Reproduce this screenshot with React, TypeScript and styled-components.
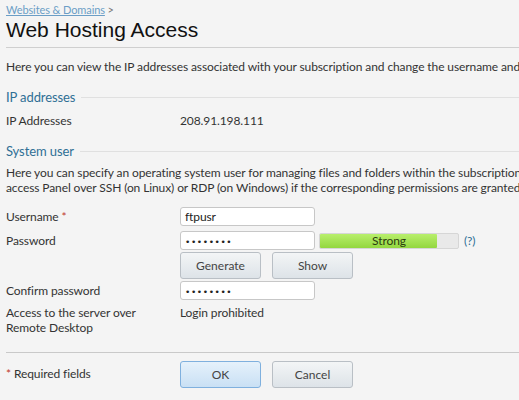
import React from "react";
import styled, { createGlobalStyle } from "styled-components";

const GlobalStyle = createGlobalStyle`
  html, body {
    margin: 0;
    padding: 0;
    background: #f4f4f4;
    overflow: hidden;
  }
  body {
    font-family: Lato, "Liberation Sans", Arial, sans-serif;
    font-size: 12px;
    letter-spacing: -0.1px;
    color: #333;
  }
`;

const Page = styled.div`
  padding: 3px 0 0 6px;
  width: 640px;
`;

const Breadcrumb = styled.div`
  font-size: 11px;
  color: #777;
  line-height: 14px;

  a {
    color: #6b9ec6;
    text-decoration: underline;
  }
`;

const Title = styled.h1`
  margin: 0;
  font-family: "Liberation Sans", Arial, sans-serif;
  font-weight: normal;
  font-size: 21px;
  letter-spacing: 0;
  line-height: 26px;
  color: #111;
  padding-bottom: 4px;
  border-bottom: 1px solid #cfcfcf;
`;

const Intro = styled.p`
  margin: 12px 0 0;
  line-height: 14px;
  white-space: nowrap;
`;

const Section = styled.fieldset`
  border: 0;
  margin: 0;
  padding: 0;
`;

const SectionTitle = styled.div<{ $top: number }>`
  display: flex;
  align-items: center;
  gap: 6px;
  color: #2f6f95;
  font-size: 13px;
  line-height: 16px;
  margin-top: ${(p) => p.$top}px;

  &::after {
    content: "";
    flex: 1;
    border-top: 1px solid #e0e0e0;
  }
`;

const Row = styled.div<{ $top?: number }>`
  display: grid;
  grid-template-columns: 174px auto;
  align-items: start;
  margin-top: ${(p) => p.$top ?? 0}px;
`;

const Label = styled.div`
  line-height: 15px;
  padding-top: 2px;

  em {
    font-style: normal;
    color: #c0392b;
  }
`;

const Value = styled.div`
  line-height: 15px;
  padding-top: 2px;
`;

const Note = styled.p`
  margin: 6px 0 0;
  line-height: 15px;
  white-space: nowrap;
`;

const Controls = styled.div`
  display: flex;
  align-items: center;
  gap: 4px;
`;

const Input = styled.div`
  box-sizing: border-box;
  width: 135px;
  height: 19px;
  padding: 1px 4px;
  border: 1px solid #c7c7c7;
  border-radius: 3px;
  background: #fff;
  color: #222;
  line-height: 15px;
`;

const Dots = styled.span`
  font-family: "DejaVu Sans", sans-serif;
  font-size: 9px;
  letter-spacing: 0.6px;
  color: #222;
`;

const Meter = styled.div`
  position: relative;
  box-sizing: border-box;
  width: 140px;
  height: 16px;
  border: 1px solid #d6d6d6;
  border-radius: 2px;
  background: #e9e9e9;
`;

const MeterFill = styled.div`
  height: 100%;
  background: linear-gradient(#b8ef6c, #93d73f);
  border-radius: 1px;
`;

const MeterText = styled.span`
  position: absolute;
  inset: 0;
  display: flex;
  align-items: center;
  justify-content: center;
  color: #2b3b10;
  font-size: 12px;
`;

const Hint = styled.span`
  color: #2f6f95;
  margin-left: 1px;
`;

const Buttons = styled.div<{ $top?: number }>`
  display: flex;
  gap: 11px;
  margin-top: ${(p) => p.$top ?? 0}px;
`;

const Button = styled.button<{ $primary?: boolean }>`
  box-sizing: border-box;
  width: 81px;
  height: 27px;
  border: 1px solid ${(p) => (p.$primary ? "#7fb0de" : "#b9bfc5")};
  border-radius: 3px;
  background: ${(p) =>
    p.$primary
      ? "linear-gradient(#e5f1fb, #c9e0f4)"
      : "linear-gradient(#f3f5f6, #dde3e8)"};
  font-family: inherit;
  font-size: 12px;
  color: #444;
  padding: 0;
`;

const Footer = styled.div`
  margin-top: 17px;
  border-top: 1px solid #c9c9c9;
  padding-top: 8px;
  display: grid;
  grid-template-columns: 174px auto;
`;

const Required = styled.div`
  padding-top: 5px;
  em {
    font-style: normal;
    color: #c0392b;
  }
`;

export default function App() {
  return (
    <>
      <GlobalStyle />
      <Page>
        <Breadcrumb>
          <a>Websites &amp; Domains</a> &gt;
        </Breadcrumb>
        <Title>Web Hosting Access</Title>
        <Intro>
          Here you can view the IP addresses associated with your subscription and change the
          username and password used for access.
        </Intro>

        <Section>
          <SectionTitle $top={15}>IP addresses</SectionTitle>
          <Row $top={6}>
            <Label>IP Addresses</Label>
            <Value>208.91.198.111</Value>
          </Row>
        </Section>

        <Section>
          <SectionTitle $top={15}>System user</SectionTitle>
          <Note>
            Here you can specify an operating system user for managing files and folders within the subscription. The user can also
            <br />
            access Panel over SSH (on Linux) or RDP (on Windows) if the corresponding permissions are granted.
          </Note>
          <Row $top={12}>
            <Label>
              Username <em>*</em>
            </Label>
            <Input>ftpusr</Input>
          </Row>
          <Row $top={5}>
            <Label>Password</Label>
            <div>
              <Controls>
                <Input>
                  <Dots>••••••••</Dots>
                </Input>
                <Meter>
                  <MeterFill style={{ width: "85%" }} />
                  <MeterText>Strong</MeterText>
                </Meter>
                <Hint>(?)</Hint>
              </Controls>
              <Buttons $top={2}>
                <Button>Generate</Button>
                <Button>Show</Button>
              </Buttons>
            </div>
          </Row>
          <Row $top={2}>
            <Label>Confirm password</Label>
            <Input>
              <Dots>••••••••</Dots>
            </Input>
          </Row>
          <Row $top={3}>
            <Label>
              Access to the server over
              <br />
              Remote Desktop
            </Label>
            <Value>Login prohibited</Value>
          </Row>
        </Section>

        <Footer>
          <Required>
            <em>*</em> Required fields
          </Required>
          <Buttons>
            <Button $primary>OK</Button>
            <Button>Cancel</Button>
          </Buttons>
        </Footer>
      </Page>
    </>
  );
}
